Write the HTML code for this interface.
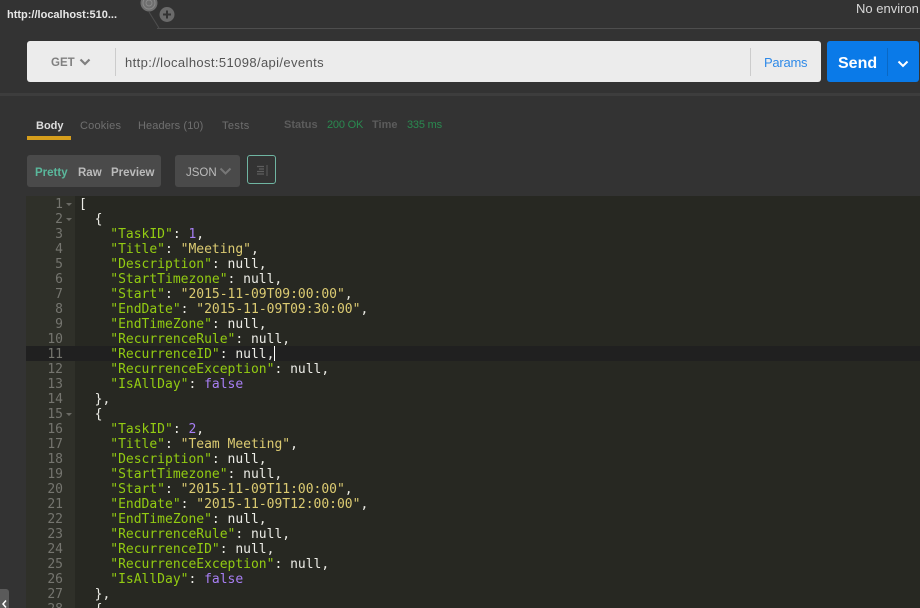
<!DOCTYPE html>
<html>
<head>
<meta charset="utf-8">
<style>
html,body{margin:0;padding:0;width:920px;height:608px;overflow:hidden;background:#333;}
body{position:relative;font-family:"Liberation Sans",sans-serif;}
.a{position:absolute;white-space:pre;}
#code .k{color:#93cc12}
#code .s{color:#dccb72}
#code .n{color:#a87ff5}
#code{position:absolute;left:79px;top:197px;font:13px/15px "DejaVu Sans Mono",monospace;color:#ecece6;white-space:pre;letter-spacing:-0.01px}
#nums{position:absolute;left:26px;width:37px;top:197px;font:13px/15px "DejaVu Sans Mono",monospace;color:#75756f;text-align:right;white-space:pre}
</style>
</head>
<body>
<div class="a" style="left:7px;top:8px;font-size:11px;font-weight:bold;color:#e8e8e8;line-height:14px">http://localhost:510...</div>

<svg class="a" style="left:136px;top:0" width="50" height="30" viewBox="0 0 50 30">
<circle cx="13" cy="3" r="8.500" fill="#6e6e6e"/><circle cx="13" cy="3" r="6" fill="none" stroke="#8a8a8a" stroke-width="1"/><circle cx="13" cy="3" r="3" fill="#6e6e6e" stroke="#8a8a8a"/>
<circle cx="31" cy="14.500" r="7.500" fill="#6a6a6a"/><path d="M31 10.500v8M27 14.500h8" stroke="#333" stroke-width="2"/>
<path d="M13 12l10 16" stroke="#4e4e4e" stroke-width="1" fill="none"/>
</svg>
<div class="a" style="left:157px;top:28px;width:763px;height:1px;background:#4e4e4e"></div>
<div class="a" style="left:856px;top:1px;font-size:13px;line-height:16px;color:#d8d8d8">No environ</div>

<div class="a" style="left:27px;top:41px;width:794px;height:41px;background:#ececec;border-radius:3px"></div>
<div class="a" style="left:51px;top:56px;font-size:11.500px;font-weight:bold;color:#808080;line-height:14px">GET</div>
<svg class="a" style="left:79px;top:58px" width="12" height="9"><path d="M1.500 1.500l4.500 4.500 4.500-4.500" fill="none" stroke="#808080" stroke-width="2.200"/></svg>
<div class="a" style="left:115px;top:48px;width:1px;height:28px;background:#ccc"></div>
<div class="a" style="left:125px;top:55px;font-size:13px;line-height:16px;color:#555;letter-spacing:.38px">http://localhost:51098/api/events</div>
<div class="a" style="left:750px;top:48px;width:1px;height:28px;background:#ccc"></div>
<div class="a" style="left:764px;top:55px;font-size:13px;line-height:16px;color:#2f8ae8;letter-spacing:-.25px">Params</div>

<div class="a" style="left:827px;top:41px;width:92px;height:41px;background:#0a7ae8;border-radius:3px"></div>
<div class="a" style="left:838px;top:54px;font-size:16px;font-weight:bold;line-height:19px;color:#fff">Send</div>
<div class="a" style="left:887px;top:48px;width:1px;height:28px;background:#0a68c4"></div>
<svg class="a" style="left:897px;top:60px" width="12" height="9"><path d="M1.500 1.500l4.500 4.500 4.500-4.500" fill="none" stroke="#fff" stroke-width="2"/></svg>

<div class="a" style="left:0;top:93px;width:920px;height:3px;background:#3d3d3d"></div>

<div class="a" style="left:36px;top:119px;font-size:11px;line-height:14px;font-weight:bold;color:#ddd">Body</div>
<div class="a" style="left:27px;top:136px;width:44px;height:4px;background:#d69e1c"></div>
<div class="a" style="left:80px;top:119px;font-size:11px;line-height:14px;color:#6f6f6f;letter-spacing:.2px">Cookies</div>
<div class="a" style="left:138px;top:119px;font-size:11px;line-height:14px;color:#6f6f6f;letter-spacing:.1px">Headers (10)</div>
<div class="a" style="left:222px;top:119px;font-size:11px;line-height:14px;color:#6f6f6f;letter-spacing:.4px">Tests</div>
<div class="a" style="left:284px;top:118px;font-size:11px;line-height:14px;font-weight:bold;color:#5c5c5c">Status</div>
<div class="a" style="left:327px;top:118px;font-size:11px;line-height:14px;color:#2a8a50;letter-spacing:-.2px">200 OK</div>
<div class="a" style="left:372px;top:118px;font-size:11px;line-height:14px;font-weight:bold;color:#5c5c5c">Time</div>
<div class="a" style="left:407px;top:118px;font-size:11px;line-height:14px;color:#2a8a50;letter-spacing:-.2px">335 ms</div>

<div class="a" style="left:27px;top:155px;width:134px;height:32px;background:#4a4a4a;border-radius:3px"></div>
<div class="a" style="left:35px;top:166px;font-size:11.500px;line-height:14px;font-weight:bold;color:#5ab89c">Pretty</div>
<div class="a" style="left:78px;top:166px;font-size:11.500px;line-height:14px;font-weight:bold;color:#bbb">Raw</div>
<div class="a" style="left:111px;top:166px;font-size:11.500px;line-height:14px;font-weight:bold;color:#bbb">Preview</div>
<div class="a" style="left:175px;top:155px;width:65px;height:32px;background:#4a4a4a;border-radius:3px"></div>
<div class="a" style="left:186px;top:166px;font-size:11.500px;line-height:14px;color:#bbb">JSON</div>
<svg class="a" style="left:219px;top:167px" width="13" height="9"><path d="M1.500 1.500l5 5 5-5" fill="none" stroke="#777" stroke-width="2"/></svg>
<div class="a" style="left:247px;top:155px;width:27px;height:27px;border:1px solid #6fb5a2;border-radius:3px"></div>
<svg class="a" style="left:255px;top:164px" width="14" height="13"><path d="M2 2.500h7M4 5h5M2 7.500h7M2 10h7" stroke="#5e5e5e" stroke-width="1.200"/><path d="M12 1v11" stroke="#5e5e5e" stroke-width="1"/></svg>

<div class="a" style="left:26px;top:196px;width:894px;height:412px;background:#272822"></div>
<div class="a" style="left:26px;top:196px;width:49px;height:412px;background:#2f3029"></div>
<div class="a" style="left:26px;top:346px;width:894px;height:15px;background:#202020"></div>
<div class="a" style="left:0;top:589px;width:9px;height:19px;background:#5a5a5a;border-radius:0 3px 0 0"></div>
<svg class="a" style="left:1px;top:600px" width="7" height="8"><path d="M5 0.500l-3 3.500 3 3.500" fill="none" stroke="#fff" stroke-width="1.500"/></svg>
<div class="a" style="left:274px;top:346px;width:1px;height:15px;background:#fff"></div>

<div id="nums">1
2
3
4
5
6
7
8
9
10
11
12
13
14
15
16
17
18
19
20
21
22
23
24
25
26
27
28</div>
<svg class="a" style="left:65px;top:197px" width="8" height="412" fill="#6a6a64"><path d="M1 6h6l-3 3zM1 21h6l-3 3zM1 216h6l-3 3zM1 411h6l-3 3z"/></svg>

<div id="code">[
  {
    <span class="k">"TaskID"</span>: <span class="n">1</span>,
    <span class="k">"Title"</span>: <span class="s">"Meeting"</span>,
    <span class="k">"Description"</span>: null,
    <span class="k">"StartTimezone"</span>: null,
    <span class="k">"Start"</span>: <span class="s">"2015-11-09T09:00:00"</span>,
    <span class="k">"EndDate"</span>: <span class="s">"2015-11-09T09:30:00"</span>,
    <span class="k">"EndTimeZone"</span>: null,
    <span class="k">"RecurrenceRule"</span>: null,
    <span class="k">"RecurrenceID"</span>: null,
    <span class="k">"RecurrenceException"</span>: null,
    <span class="k">"IsAllDay"</span>: <span class="n">false</span>
  },
  {
    <span class="k">"TaskID"</span>: <span class="n">2</span>,
    <span class="k">"Title"</span>: <span class="s">"Team Meeting"</span>,
    <span class="k">"Description"</span>: null,
    <span class="k">"StartTimezone"</span>: null,
    <span class="k">"Start"</span>: <span class="s">"2015-11-09T11:00:00"</span>,
    <span class="k">"EndDate"</span>: <span class="s">"2015-11-09T12:00:00"</span>,
    <span class="k">"EndTimeZone"</span>: null,
    <span class="k">"RecurrenceRule"</span>: null,
    <span class="k">"RecurrenceID"</span>: null,
    <span class="k">"RecurrenceException"</span>: null,
    <span class="k">"IsAllDay"</span>: <span class="n">false</span>
  },
  {</div>
</body>
</html>
